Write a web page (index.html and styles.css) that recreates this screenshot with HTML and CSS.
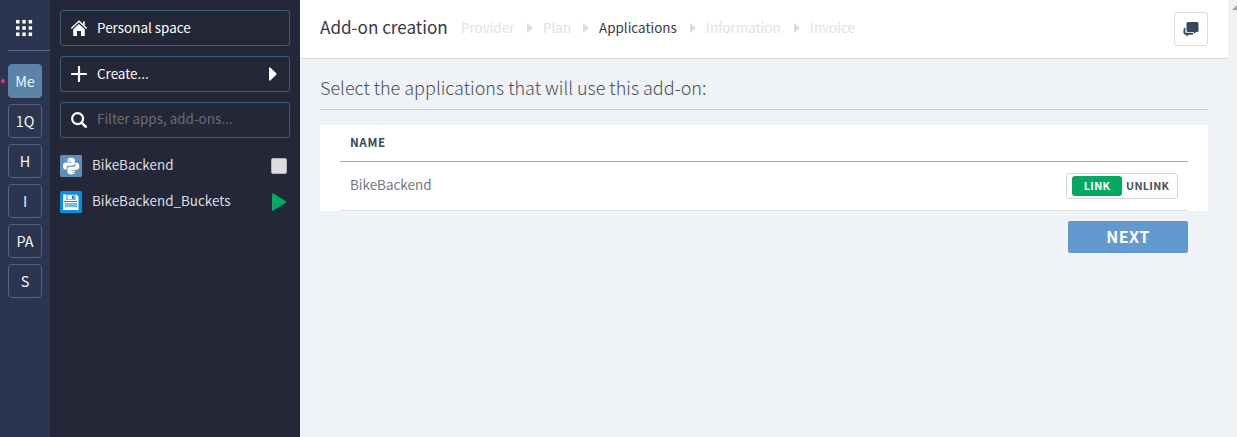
FILE: index.html
```
<!DOCTYPE html>
<html lang="en">
<head>
<meta charset="utf-8">
<title>Add-on creation</title>
<link rel="stylesheet" href="styles.css">
</head>
<body>
<div class="app">
  <nav class="rail">
    <div class="rail-top">
      <svg width="18" height="18" viewBox="0 0 18 18" fill="#fff"><path d="M1 1h3.500v3.500H1zM7.300 1h3.500v3.500H7.300zM13.600 1h3.500v3.500h-3.500zM1 7.300h3.500v3.500H1zM7.300 7.300h3.500v3.500H7.300zM13.600 7.300h3.500v3.500h-3.500zM1 13.600h3.500v3.500H1zM7.300 13.600h3.500v3.500H7.300zM13.600 13.600h3.500v3.500h-3.500z"/></svg>
    </div>
    <a class="org active">Me</a>
    <a class="org">1Q</a>
    <a class="org">H</a>
    <a class="org">I</a>
    <a class="org">PA</a>
    <a class="org">S</a>
  </nav>
  <aside class="sidebar">
    <div class="box">
      <svg width="16" height="16" viewBox="0 0 16 16"><path d="M.3 8.400 8 1.200l7.700 7.200" fill="none" stroke="#fff" stroke-width="1.400"/><path d="M2.200 9.300 8 4l5.800 5.300V16H10v-5H6v5H2.200z" fill="#fff"/><path d="M12 1.500h1.700V6L12 4.500z" fill="#fff"/></svg>
      <span>Personal space</span>
    </div>
    <div class="box">
      <svg width="16" height="16" viewBox="0 0 16 16"><path d="M8 1v14M1 8h14" stroke="#fff" stroke-width="2.200" stroke-linecap="round"/></svg>
      <span class="grow">Create...</span>
      <svg width="8" height="14" viewBox="0 0 8 14"><path d="M0 1.500Q0 0 1.300.4L7.500 6.500v1L1.300 13.600Q0 14 0 12.500z" fill="#fff"/></svg>
    </div>
    <div class="box filter">
      <svg width="16" height="16" viewBox="0 0 16 16" fill="none" stroke="#fff" stroke-linecap="round"><circle cx="6.600" cy="6.600" r="5.500" stroke-width="2.200"/><path d="M10.800 10.800 14.700 14.700" stroke-width="2.600"/></svg>
      <span class="placeholder">Filter apps, add-ons...</span>
    </div>
    <div class="apps">
      <div class="item">
        <svg width="22" height="22" viewBox="0 0 22 22"><rect width="22" height="22" rx="1.500" fill="#5c90bb"/><path d="M11 2.800c-3 0-3.500 1-3.500 2.400v1.600h3.800v.7H5.500C3.800 7.500 2.900 8.900 2.900 11s.9 3.600 2.400 3.600h1.500v-1.900c0-1.400 1.100-2.300 2.400-2.300h3.600c1.200 0 2-.9 2-2V5.200c0-1.700-1.500-2.400-3.800-2.400z" fill="#fff"/><path d="M11.200 19.500c3 0 3.600-1 3.600-2.400v-1.600H11v-.7h5.700c1.700 0 2.600-1.400 2.600-3.500s-.9-3.600-2.400-3.600h-1.400v1.800c0 1.400-1.100 2.300-2.400 2.300H9.500c-1.200 0-2 .9-2 2v3.300c0 1.700 1.500 2.400 3.700 2.400z" fill="#fff"/><circle cx="9.300" cy="4.900" r=".7" fill="#5c90bb"/><circle cx="13" cy="17.400" r=".7" fill="#5c90bb"/></svg>
        <span class="grow">BikeBackend</span>
        <i class="stopped"></i>
      </div>
      <div class="item">
        <svg width="22" height="22" viewBox="0 0 22 22"><rect width="22" height="22" rx="1.500" fill="#0a8fdd"/><path d="M3 3.500h13.500l2 2V19H3z" fill="#fff"/><path d="M6.500 3.500h9V9h-9z" fill="#0a8fdd"/><path d="M7.500 4h7v4.500h-7z" fill="#fff"/><path d="M12 4.500h2v3.500h-2zM4.200 10h13v1h-13z" fill="#0a8fdd"/><path d="M5 12h12v4.200H5z" fill="#4eaee4"/><path d="M5.500 13.200h11M6 15h10" stroke="#e6f4fc" stroke-width=".7" stroke-dasharray="1.500 .7"/></svg>
        <span class="grow">BikeBackend_Buckets</span>
        <svg width="16" height="18" viewBox="0 0 16 18"><path d="M1 1.200Q1-.2 2.500.6L15.300 8.500v1L2.500 17.600Q1 18.200 1 17z" fill="#04a863"/></svg>
      </div>
    </div>
  </aside>
  <main class="main">
    <header class="header">
      <h1>Add-on creation</h1>
      <ol class="crumbs">
        <li class="c1">Provider</li><li class="c2">Plan</li><li class="c3 current">Applications</li><li class="c4">Information</li><li class="c5">Invoice</li>
      </ol>
      <button class="chat"><svg width="16" height="15" viewBox="0 0 16 15" fill="#36495a"><path d="M5 0h9.200Q15.500 0 15.500 1.500v7Q15.500 10 14.200 10H13l-1.500 1.700L10.500 10H5Q3.500 10 3.500 8.500v-7Q3.500 0 5 0z"/><path d="M2.300 5.500v5.300h7.200l1 1.200-.8.800H5.500L4.200 14.200 2.700 12.800Q.5 12.800.5 10.800V7.500Q.5 5.800 2.300 5.500z"/></svg></button>
    </header>
    <section class="content">
      <h2>Select the applications that will use this add-on:</h2>
      <div class="panel">
        <div class="thead">NAME</div>
        <div class="trow">
          <span class="grow">BikeBackend</span>
          <div class="toggle"><span class="on">LINK</span><span class="off">UNLINK</span></div>
        </div>
      </div>
      <button class="next">NEXT</button>
    </section>
  </main>
  <div class="scrollbar"><svg width="9" height="14" viewBox="0 0 9 14"><path d="M4 10 8.500 5.500 13 10z" fill="#a3a3a3"/></svg></div>
</div>
</body>
</html>
```
FILE: styles.css
```
* { box-sizing: border-box; }
body { margin: 0; overflow: hidden; font-family: "Noto Sans CJK SC", sans-serif; font-size: 13.45px; color: #36393f; }
h1, h2, ol { margin: 0; padding: 0; font-weight: 400; list-style: none; }
button { font-family: inherit; padding: 0; margin: 0; }
svg { display: block; flex: none; }
.app { display: flex; height: 437px; }
.grow { flex: 1; }

.rail { width: 50px; background: #2c3550; padding-left: 8px; flex: none; }
.rail-top { height: 51px; border-bottom: 1px solid #526a8b; padding: 18.5px 0 0 7px; margin-bottom: 13px; }
.org { display: flex; align-items: center; justify-content: center; width: 34px; height: 34px; margin-bottom: 6px; border: 1px solid #59627c; border-radius: 4px; color: #f2f4f8; font-size: 14.4px; line-height: 20px; position: relative; }
.org.active { background: #5c84a8; border-color: #5c84a8; }
.org.active::before { content: ""; position: absolute; left: -8px; top: 14px; width: 4px; height: 4px; border-radius: 50%; background: #fc2a72; }

.sidebar { width: 250px; background: #232738; padding: 10px; flex: none; color: #fff; }
.box { display: flex; align-items: center; gap: 10px; height: 36px; margin-bottom: 10px; padding: 0 12px 0 10px; border: 1px solid #3f5d7c; border-radius: 3px; line-height: 20px; }
.box span { padding-bottom: 2px; }
.item span, .trow .grow { padding-bottom: 4px; }
.filter .placeholder { color: #6d6f72; padding-bottom: 4px; }
.item { display: flex; align-items: center; gap: 10px; height: 36px; padding-right: 3px; color: #dcdee3; line-height: 20px; }
.stopped { width: 16px; height: 16px; background: #dcdcdc; border: 1px solid #b4b4b8; border-radius: 2px; }

.main { flex: 1; background: #eff3f8; min-width: 0; }
.header { display: flex; align-items: center; height: 59px; padding: 0 20px; background: #fff; border-bottom: 1px solid #d9dcdf; }
.header h1 { width: 141px; padding-bottom: 4px; font-size: 17.1px; line-height: 24px; white-space: nowrap; }
.crumbs { display: flex; flex: 1; color: #e0e1e3; line-height: 20px; padding-bottom: 4px; }
.crumbs li { display: flex; align-items: center; white-space: nowrap; }
.crumbs li:not(:last-child)::after { content: ""; margin: 1px 10px 0 auto; border-left: 6px solid #dcdddf; border-top: 5px solid transparent; border-bottom: 5px solid transparent; }
.c1 { width: 82px; }
.c2 { width: 56px; }
.c3 { width: 107px; }
.c4 { width: 104px; }
.crumbs .current { color: #3a3c40; }
.chat { width: 34px; height: 34px; border: 1px solid #d9dbdd; border-radius: 3px; background: #fff; display: flex; align-items: center; justify-content: center; }

.content { padding: 16px 20px; }
.content h2 { height: 35px; border-bottom: 1px solid #c5cbd2; font-size: 18px; line-height: 25px; font-weight: 300; color: #4c4f54; }
.panel { margin-top: 15px; height: 86px; padding: 0 20px; background: #fff; }
.thead { height: 37px; padding-left: 10px; border-bottom: 1px solid #9aa9c3; font-weight: 700; font-size: 11.7px; letter-spacing: .6px; line-height: 34px; color: #36495a; }
.trow { display: flex; align-items: center; height: 49px; padding: 0 10px; border-bottom: 1px solid #dfe1e4; line-height: 20px; color: #75797f; }
.toggle { display: flex; align-items: center; width: 112px; height: 26px; border: 1px solid #d3d6e2; border-radius: 3px; padding-left: 5px; font-weight: 700; font-size: 10.8px; letter-spacing: .3px; line-height: 18px; }
.on { width: 50px; height: 20px; border-radius: 3px; background: #04a863; color: #fff; text-align: center; }
.off { height: 20px; margin-left: 4px; color: #45505e; }
.next { display: block; width: 120px; height: 32px; margin: 10px 20px 0 auto; border: 0; border-radius: 2px; background: #6399d1; color: #fff; font-size: 16px; font-weight: 700; letter-spacing: .5px; line-height: 30px; padding-bottom: 2px; }
.scrollbar { width: 9px; background: #f1f1f1; flex: none; }
```
